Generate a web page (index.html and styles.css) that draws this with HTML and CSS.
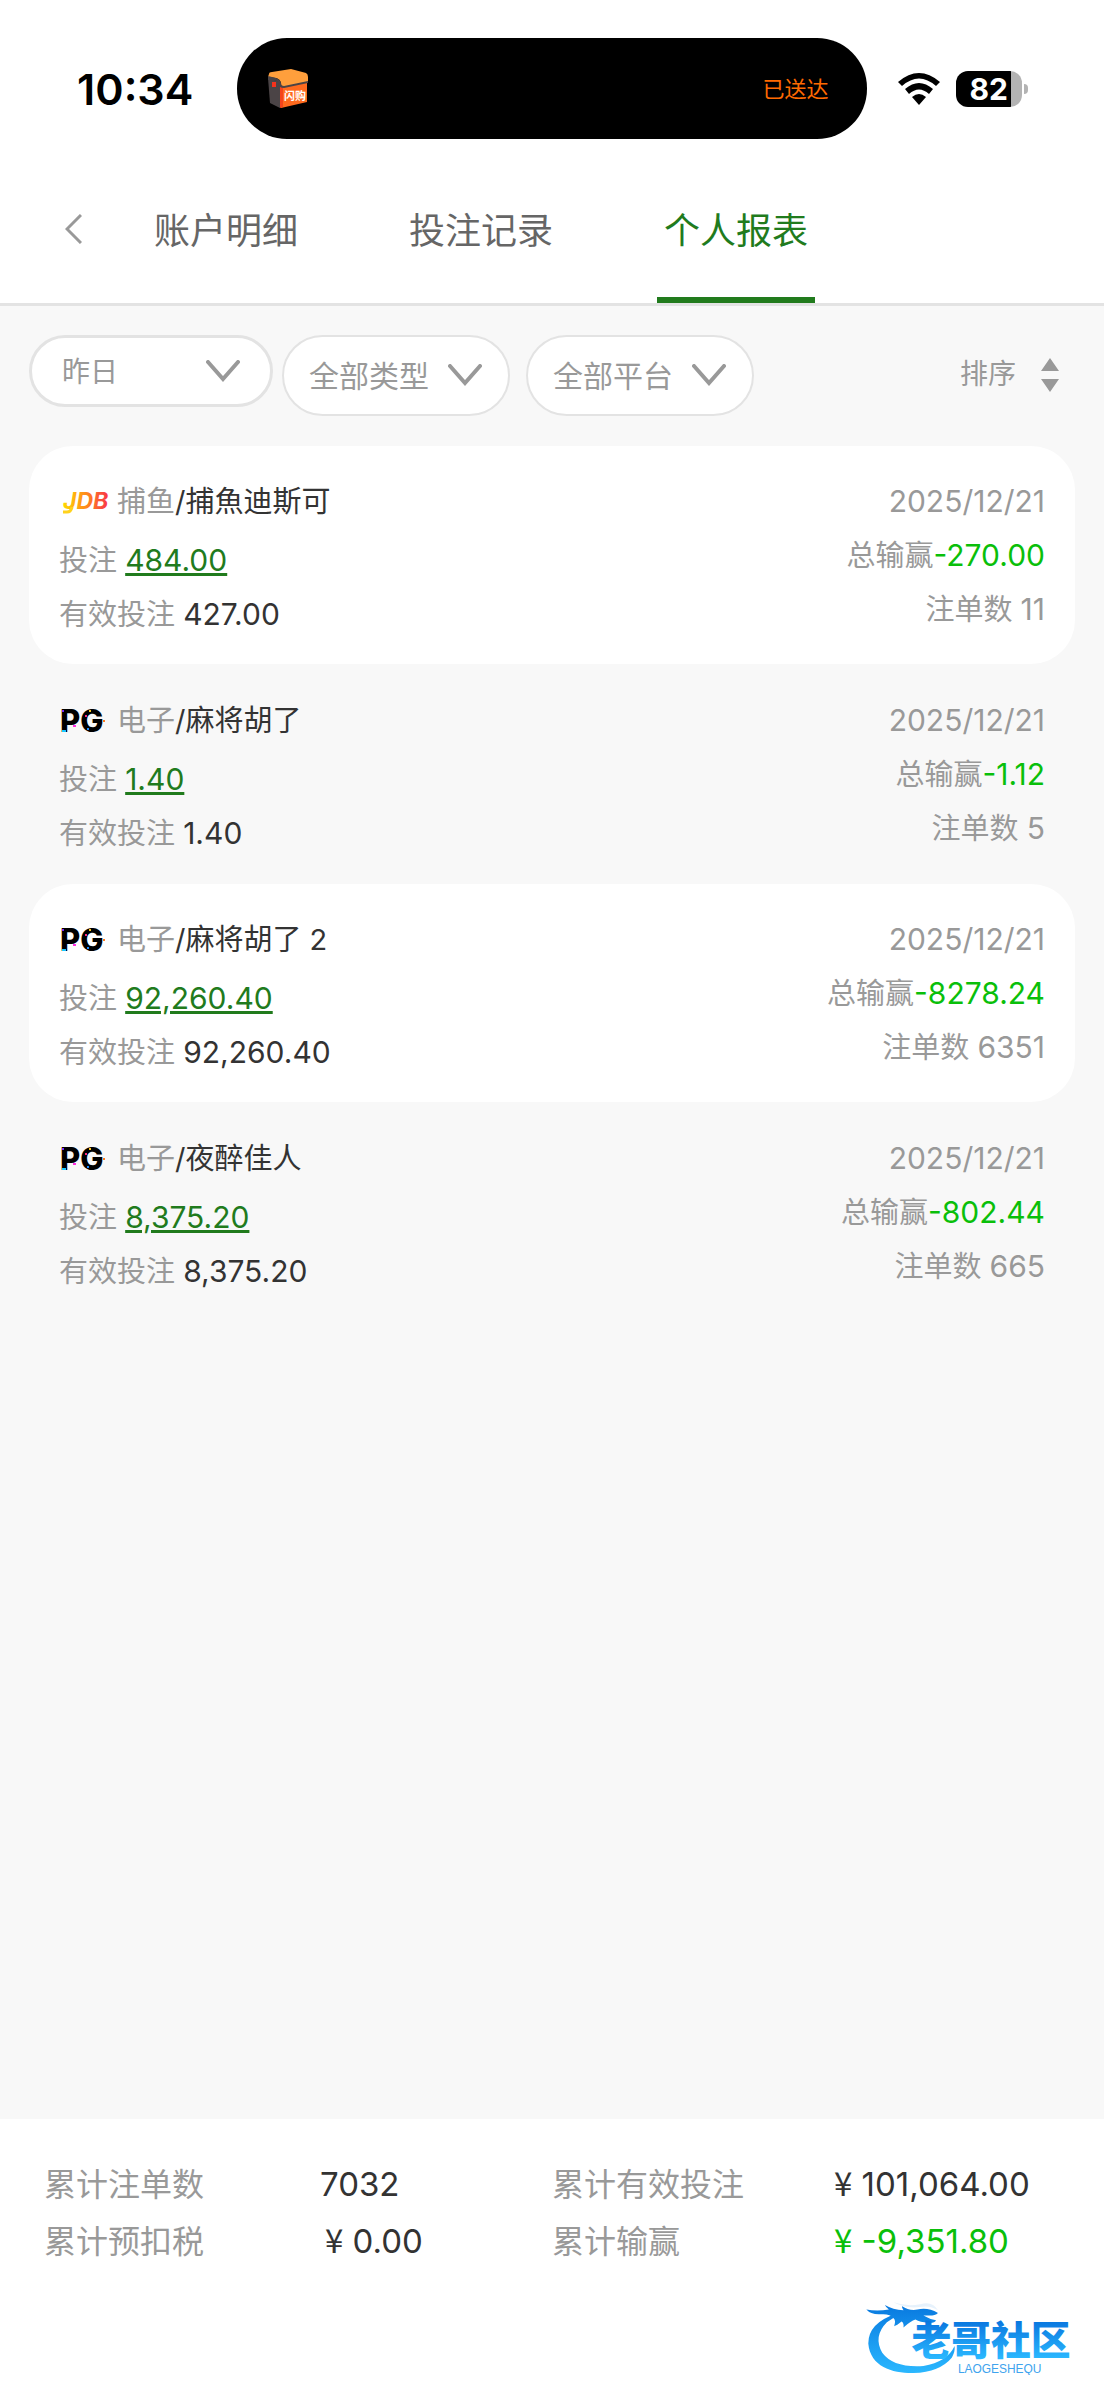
FILE: index.html
```html
<!DOCTYPE html>
<html lang="zh-CN">
<head>
    <meta charset="UTF-8">
    <meta name="viewport" content="width=device-width, initial-scale=1.0">
    <title>个人报表</title>
    <link rel="stylesheet" href="styles.css">
</head>
<body>
    <div class="page">
        <div class="status-bar">
            <div class="status-time">10:34</div>
            <div class="island">
                <svg class="island-icon" viewBox="0 0 42 40" aria-hidden="true">
                    <path d="M1 9L13 13V39L3 34Z" fill="#4b4446"/>
                    <path d="M13 15L40 11V33L14 39Z" fill="#ff6a1e"/>
                    <path d="M13 15V39L16 38V15Z" fill="#f4431c"/>
                    <path d="M2 5Q2 3 5 3L24 0L39 4Q41 5 41 8V13L17 18Q14 18 14 14Q13 10 9 9L1 8Z" fill="#ff9f3c"/>
                    <path d="M1 7L9 9Q13 10 14 14Q14 17 17 17L41 12V14L17 19Q12 19 11 15L10 12L1 11Z" fill="#4b4446"/>
                    <path d="M5 13h4v5h-4z" fill="#f4321c"/>
                    <text class="island-icon-text" x="17" y="31">闪购</text>
                </svg>
                <span class="island-text">已送达</span>
            </div>
            <div class="status-icons">
                <svg width="44" height="34" viewBox="0 0 44 34" aria-hidden="true">
                    <path d="M1 10Q22 -8 43 10L39 14Q22 -1 5 14Z"/>
                    <path d="M8 17Q22 5 36 17L32 22Q22 13 12 22Z"/>
                    <path d="M15 25Q22 19 29 25L22 33Z"/>
                </svg>
                <div class="battery">82</div>
            </div>
        </div>

        <nav class="tab-bar">
            <button class="back-button" aria-label="返回">
                <svg width="17" height="30" viewBox="0 0 17 30" aria-hidden="true">
                    <path d="M16 1L2 15L16 29" fill="none" stroke="#999" stroke-width="3"/>
                </svg>
            </button>
            <a href="#" class="tab">账户明细</a>
            <a href="#" class="tab">投注记录</a>
            <a href="#" class="tab active">个人报表</a>
        </nav>

        <main class="content">
            <div class="filters">
                <div class="filter filter-date">
                    <select aria-label="日期">
                        <option>昨日</option>
                    </select>
                    <svg class="filter-arrow" viewBox="0 0 34 22" aria-hidden="true">
                        <path d="M2 2L17 19L32 2"/>
                    </svg>
                </div>
                <div class="filter-group">
                    <div class="filter">
                        <select aria-label="类型">
                            <option>全部类型</option>
                        </select>
                        <svg class="filter-arrow" viewBox="0 0 34 22" aria-hidden="true">
                            <path d="M2 2L17 19L32 2"/>
                        </svg>
                    </div>
                    <div class="filter">
                        <select aria-label="平台">
                            <option>全部平台</option>
                        </select>
                        <svg class="filter-arrow" viewBox="0 0 34 22" aria-hidden="true">
                            <path d="M2 2L17 19L32 2"/>
                        </svg>
                    </div>
                </div>
                <button class="sort-button">
                    排序
                    <svg class="sort-icon" viewBox="0 0 20 34" aria-hidden="true">
                        <path d="M10 0L19 13H1ZM1 21H19L10 34Z" fill="#999"/>
                    </svg>
                </button>
            </div>

            <ul class="records">
                <li class="record">
                    <div class="record-left">
                        <div class="record-title">
                            <svg class="record-logo" viewBox="0 -7 50 44">
                                <defs>
                                    <linearGradient id="jdb-fill" x1="0" y1="0" x2="1" y2="0">
                                        <stop offset="0" stop-color="#ffd800"/>
                                        <stop offset="0.5" stop-color="#ff8a1c"/>
                                        <stop offset="1" stop-color="#f8324a"/>
                                    </linearGradient>
                                </defs>
                                <text class="jdb-text" x="4" y="22">JDB</text>
                                <path d="M4 25h4q4 0 5-5" fill="none" stroke="#ffd21c" stroke-width="3"/>
                            </svg>
                            <div>捕鱼<span class="dark">/捕魚迪斯可</span></div>
                        </div>
                        <div>投注 <a href="#" class="bet-link num">484.00</a></div>
                        <div>有效投注 <span class="dark num">427.00</span></div>
                    </div>
                    <div class="record-right">
                        <div><span class="num">2025/12/21</span></div>
                        <div>总输赢<span class="loss num">-270.00</span></div>
                        <div>注单数 <span class="num">11</span></div>
                    </div>
                </li>
                <li class="record">
                    <div class="record-left">
                        <div class="record-title">
                            <svg class="record-logo" viewBox="0 -7 50 44">
                                <text class="pg-text" x="1" y="26">PG</text>
                                <path d="M3 4h2v2h-2z" fill="#7a2cff"/>
                                <path d="M3 24h4v2h-4z" fill="#19c8ff"/>
                                <path d="M14 19h3v2h-3z" fill="#ff2ce0"/>
                                <path d="M26 9h2v2h-2z" fill="#ff2c7a"/>
                                <path d="M30 4h2v2h-2z" fill="#ffc81c"/>
                                <path d="M28 22h2v2h-2z" fill="#1c8cff"/>
                                <path d="M44 14h2v2h-2z" fill="#ff7a1c"/>
                            </svg>
                            <div>电子<span class="dark">/麻将胡了</span></div>
                        </div>
                        <div>投注 <a href="#" class="bet-link num">1.40</a></div>
                        <div>有效投注 <span class="dark num">1.40</span></div>
                    </div>
                    <div class="record-right">
                        <div><span class="num">2025/12/21</span></div>
                        <div>总输赢<span class="loss num">-1.12</span></div>
                        <div>注单数 <span class="num">5</span></div>
                    </div>
                </li>
                <li class="record">
                    <div class="record-left">
                        <div class="record-title">
                            <svg class="record-logo" viewBox="0 -7 50 44">
                                <text class="pg-text" x="1" y="26">PG</text>
                                <path d="M3 4h2v2h-2z" fill="#7a2cff"/>
                                <path d="M3 24h4v2h-4z" fill="#19c8ff"/>
                                <path d="M14 19h3v2h-3z" fill="#ff2ce0"/>
                                <path d="M26 9h2v2h-2z" fill="#ff2c7a"/>
                                <path d="M30 4h2v2h-2z" fill="#ffc81c"/>
                                <path d="M28 22h2v2h-2z" fill="#1c8cff"/>
                                <path d="M44 14h2v2h-2z" fill="#ff7a1c"/>
                            </svg>
                            <div>电子<span class="dark">/麻将胡了 2</span></div>
                        </div>
                        <div>投注 <a href="#" class="bet-link num">92,260.40</a></div>
                        <div>有效投注 <span class="dark num">92,260.40</span></div>
                    </div>
                    <div class="record-right">
                        <div><span class="num">2025/12/21</span></div>
                        <div>总输赢<span class="loss num">-8278.24</span></div>
                        <div>注单数 <span class="num">6351</span></div>
                    </div>
                </li>
                <li class="record">
                    <div class="record-left">
                        <div class="record-title">
                            <svg class="record-logo" viewBox="0 -7 50 44">
                                <text class="pg-text" x="1" y="26">PG</text>
                                <path d="M3 4h2v2h-2z" fill="#7a2cff"/>
                                <path d="M3 24h4v2h-4z" fill="#19c8ff"/>
                                <path d="M14 19h3v2h-3z" fill="#ff2ce0"/>
                                <path d="M26 9h2v2h-2z" fill="#ff2c7a"/>
                                <path d="M30 4h2v2h-2z" fill="#ffc81c"/>
                                <path d="M28 22h2v2h-2z" fill="#1c8cff"/>
                                <path d="M44 14h2v2h-2z" fill="#ff7a1c"/>
                            </svg>
                            <div>电子<span class="dark">/夜醉佳人</span></div>
                        </div>
                        <div>投注 <a href="#" class="bet-link num">8,375.20</a></div>
                        <div>有效投注 <span class="dark num">8,375.20</span></div>
                    </div>
                    <div class="record-right">
                        <div><span class="num">2025/12/21</span></div>
                        <div>总输赢<span class="loss num">-802.44</span></div>
                        <div>注单数 <span class="num">665</span></div>
                    </div>
                </li>
            </ul>
        </main>

        <footer class="summary">
            <div class="summary-grid">
                <div>累计注单数</div>
                <div class="summary-value">7032</div>
                <div>累计有效投注</div>
                <div class="summary-value"><span class="yen">¥</span> 101,064.00</div>
                <div>累计预扣税</div>
                <div class="summary-value summary-tax"><span class="yen">¥</span> 0.00</div>
                <div>累计输赢</div>
                <div class="summary-value loss"><span class="yen">¥</span> -9,351.80</div>
            </div>
            <svg class="community-logo" viewBox="75 50 670 235">
                <defs>
                    <linearGradient id="blue-fill" gradientUnits="userSpaceOnUse" x1="0" y1="80" x2="0" y2="280">
                        <stop offset="0" stop-color="#0a7be0"/>
                        <stop offset="1" stop-color="#2bb8ff"/>
                    </linearGradient>
                    <linearGradient id="text-fill" gradientUnits="userSpaceOnUse" x1="0" y1="125" x2="0" y2="235">
                        <stop offset="0" stop-color="#0a78e0"/>
                        <stop offset="1" stop-color="#2bb8ff"/>
                    </linearGradient>
                </defs>
                <g fill="url(#blue-fill)">
                    <path d="M170 100Q84 128 84 190C90 262 160 280 220 279Q300 276 336 232Q346 215 344 198Q322 246 250 258Q160 264 126 218Q98 168 140 126Q158 112 178 106Z"/>
                    <path d="M78 88Q110 94 146 88Q138 82 134 74Q158 88 190 90Q184 80 186 78Q206 92 232 88Q262 80 294 98Q286 106 268 106L250 106Q270 118 288 120Q284 130 264 128Q240 126 226 118Q212 122 190 142Q192 128 184 124Q170 136 162 138Q168 120 160 114Q150 100 122 102Q92 104 78 88Z"/>
                    <path d="M160 66Q200 80 240 72Q276 60 294 90Q270 74 240 80Q196 86 160 66Z" opacity="0.1"/>
                </g>
                <text class="community-name" x="214" y="225">老哥社区</text>
                <text class="community-latin" x="354" y="278">LAOGESHEQU</text>
            </svg>
        </footer>
    </div>
</body>
</html>
```
FILE: styles.css
```css
:root {
    --green: #217b1d;
    --loss: #0abf0a;
    --gray: #999;
    --tab-gray: #666;
    --dark: #333;
    --border: #e3e3e3;
    --page-bg: #f8f8f8;
}

* {
    margin: 0;
    padding: 0;
    box-sizing: border-box;
}

body {
    font-family: Inter, 'Noto Sans CJK SC', sans-serif;
    background: var(--page-bg);
    color: var(--gray);
}

button,
select {
    font-family: inherit;
    color: inherit;
    background: none;
    border: none;
    cursor: pointer;
}

.page {
    display: flex;
    flex-direction: column;
    min-height: 100vh;
}

/* Status bar */
.status-bar {
    display: grid;
    grid-template-columns: 1fr 57% 1fr;
    align-items: center;
    padding: 38px 0 18px;
    background: white;
    color: black;
}

.status-time {
    padding-right: 44px;
    text-align: right;
    font-size: 43px;
    font-weight: 600;
}

.island {
    display: flex;
    justify-content: space-between;
    align-items: center;
    height: 101px;
    padding: 0 38px 0 30px;
    border-radius: 50px;
    background: black;
}

.island-icon {
    width: 42px;
    height: 40px;
}

.island-icon-text {
    font-size: 11px;
    font-weight: 700;
    fill: white;
}

.island-text {
    padding-bottom: 3px;
    font-size: 22px;
    color: #ff6a00;
}

.status-icons {
    display: flex;
    align-items: center;
    gap: 15px;
    padding-left: 30px;
}

.battery {
    position: relative;
    width: 66px;
    height: 36px;
    border-radius: 12px;
    background: linear-gradient(to right, black 83%, #b3b3b3 83%);
    color: white;
    font-size: 30px;
    font-weight: 700;
    line-height: 36px;
    text-align: center;
}

.battery::after {
    content: "";
    position: absolute;
    top: 13px;
    right: -6px;
    width: 4px;
    height: 10px;
    border-radius: 0 4px 4px 0;
    background: #b3b3b3;
}

/* Tabs */
.tab-bar {
    display: flex;
    align-items: center;
    padding-left: 65px;
    border-bottom: 3px solid var(--border);
    background: white;
}

.back-button {
    width: 82px;
    height: 60px;
    text-align: left;
}

.tab {
    width: 158px;
    margin-right: 97px;
    padding-top: 2px;
    line-height: 144px;
    font-size: 36px;
    text-align: center;
    text-decoration: none;
    white-space: nowrap;
    color: var(--tab-gray);
}

.tab.active {
    color: var(--green);
    box-shadow: inset 0 -6px var(--green);
}

/* Filters */
.content {
    flex: 1;
    padding: 29px;
}

.filters {
    display: flex;
    align-items: flex-start;
    gap: 9px;
    margin-bottom: 30px;
}

.filter-group {
    display: flex;
    gap: 16px;
}

.filter {
    position: relative;
}

.filter select {
    appearance: none;
    width: 228px;
    height: 81px;
    padding-left: 25px;
    border: 2px solid var(--border);
    border-radius: 41px;
    background: white;
    font-size: 30px;
}

.filter-date select {
    width: 244px;
    height: 72px;
    padding: 2px 0 0 30px;
    border-width: 3px;
    font-size: 28px;
}

.filter-arrow {
    position: absolute;
    top: 29px;
    right: 28px;
    width: 34px;
    height: 22px;
    fill: none;
    stroke: var(--gray);
    stroke-width: 4px;
    stroke-linecap: round;
    pointer-events: none;
}

.filter-date .filter-arrow {
    top: 25px;
    right: 33px;
}

.sort-button {
    display: flex;
    align-items: center;
    gap: 24px;
    height: 74px;
    margin-left: auto;
    padding-right: 15px;
    font-size: 28px;
}

.sort-icon {
    width: 20px;
    height: 34px;
    margin-top: 6px;
}

/* Records */
.records {
    display: flex;
    flex-direction: column;
    gap: 1px;
    list-style: none;
}

.record {
    display: flex;
    justify-content: space-between;
    padding: 29px 30px 22px;
    border-radius: 44px;
    font-size: 29px;
    line-height: 54px;
}

.record:nth-child(odd) {
    background: white;
}

.record-title {
    display: flex;
    align-items: center;
    gap: 8px;
    margin-bottom: 5px;
}

.record-logo {
    width: 50px;
    height: 44px;
}

.jdb-text {
    font-size: 23px;
    font-style: italic;
    font-weight: 700;
    fill: url(#jdb-fill);
}

.pg-text {
    font-size: 31px;
    font-weight: 800;
    fill: black;
}

.record-right {
    text-align: right;
}

.num {
    font-size: 30px;
    line-height: 1;
}

.dark {
    color: var(--dark);
}

.bet-link {
    color: var(--green);
}

/* Summary */
.summary {
    padding: 37px 16px 25px 44px;
    background: white;
}

.summary-grid {
    display: grid;
    grid-template-columns: 276fr 232fr 282fr 254fr;
    margin-bottom: 27px;
    font-size: 32px;
    line-height: 57px;
}

.summary-value {
    color: var(--dark);
    font-size: 33px;
}

.summary-tax {
    padding-left: 5px;
}

.loss {
    color: var(--loss);
}

.yen {
    font-family: 'Noto Sans CJK SC', sans-serif;
    line-height: 1;
}

.community-logo {
    display: block;
    width: 223px;
    height: 78px;
    margin-left: auto;
}

.community-name {
    font-size: 120px;
    font-weight: 900;
    fill: url(#text-fill);
}

.community-latin {
    font-family: 'Liberation Sans', sans-serif;
    font-size: 36px;
    fill: #3fa4ee;
}
```
